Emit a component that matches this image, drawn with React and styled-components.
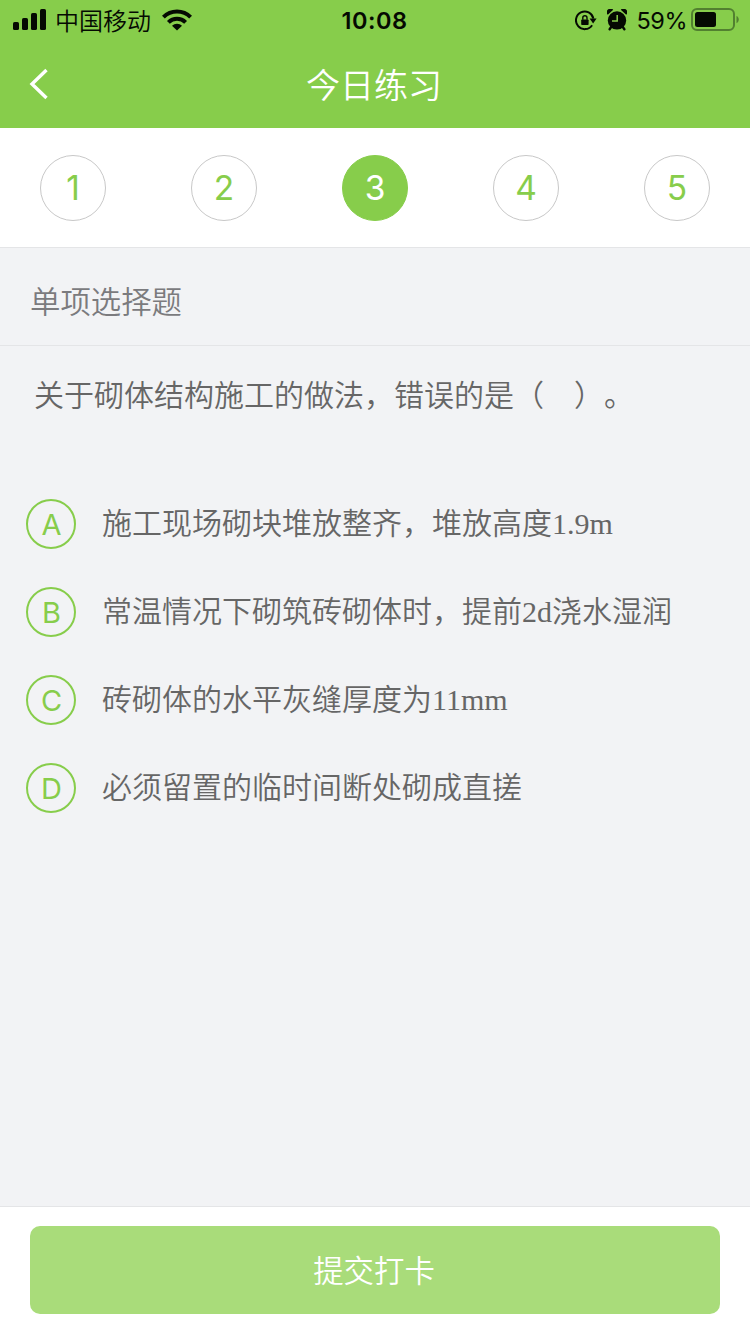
import React from 'react'
import styled, { createGlobalStyle, ThemeProvider } from 'styled-components'

const theme = {
  green: '#87cd4b',
  greenLight: '#a9dc7a',
  white: '#fff',
  black: '#050a02',
  page: '#f2f3f5',
  line: '#e4e5e7',
  text: '#666',
  textLight: '#7b7b7e',
}

const GlobalStyle = createGlobalStyle`
  * {
    box-sizing: border-box;
  }

  body {
    margin: 0;
    font-family: Inter, 'Noto Sans CJK SC', sans-serif;
    text-spacing-trim: space-all;
  }
`

const Screen = styled.div`
  display: flex;
  flex-direction: column;
  width: 750px;
  height: 1334px;
  overflow: hidden;
  background: ${({ theme }) => theme.page};
`

const StatusBar = styled.div`
  display: grid;
  grid-template-columns: 1fr auto 1fr;
  align-items: center;
  flex: none;
  height: 40px;
  padding: 0 11px 0 13px;
  color: ${({ theme }) => theme.black};
  background: ${({ theme }) => theme.green};
`

const StatusSide = styled.div`
  display: flex;
  align-items: center;
  justify-content: ${({ $end }) => ($end ? 'flex-end' : 'flex-start')};

  svg {
    display: block;
    flex: none;
  }
`

const Carrier = styled.span`
  margin: 0 11px 0 9px;
  font: 350 24px/40px 'Noto Sans CJK SC', sans-serif;
`

const Clock = styled.span`
  padding: 2px 3px 0 0;
  font-size: 23.5px;
  font-weight: 600;
  line-height: 38px;
  letter-spacing: 0.5px;
`

const Percent = styled.span`
  margin: 0 4px 0 10px;
  padding-top: 2px;
  font-size: 23.5px;
  line-height: 38px;
  letter-spacing: -0.5px;
`

const NavBar = styled.header`
  display: grid;
  grid-template-columns: 80px 1fr 80px;
  align-items: center;
  flex: none;
  height: 88px;
  color: ${({ theme }) => theme.white};
  background: ${({ theme }) => theme.green};
`

const BackButton = styled.button`
  display: flex;
  height: 88px;
  padding: 28px 0 0 28px;
  border: 0;
  color: inherit;
  background: none;
`

const NavTitle = styled.h1`
  margin: 0;
  padding: 0 2px 0 0;
  font: 350 34px/86px 'Noto Sans CJK SC', sans-serif;
  text-align: center;
`

const Steps = styled.nav`
  display: flex;
  align-items: center;
  justify-content: space-between;
  flex: none;
  height: 120px;
  padding: 0 40px;
  border-bottom: 1px solid ${({ theme }) => theme.line};
  background: ${({ theme }) => theme.white};
`

const Step = styled.button`
  width: 66px;
  height: 66px;
  padding: 0;
  border: 1px solid ${({ theme, $active }) => ($active ? theme.green : '#c8c8c8')};
  border-radius: 50%;
  color: ${({ theme, $active }) => ($active ? theme.white : theme.green)};
  background: ${({ theme, $active }) => ($active ? theme.green : theme.white)};
  font-family: inherit;
  font-size: 33.5px;
  font-weight: 380;
  line-height: 64px;
`

const SectionTitle = styled.h2`
  flex: none;
  height: 98px;
  margin: 0;
  padding-left: 30px;
  border-bottom: 1px solid ${({ theme }) => theme.line};
  color: ${({ theme }) => theme.textLight};
  font: 350 30.4px/105px 'Noto Sans CJK SC', sans-serif;
`

const Content = styled.main`
  flex: 1;
  padding: 28px 26px 0;
  color: ${({ theme }) => theme.text};
  font: 350 30px/44px 'Liberation Serif', 'Noto Sans CJK SC', serif;
`

const Question = styled.p`
  margin: 0;
  padding-left: 8px;
`

const Options = styled.ul`
  display: flex;
  flex-direction: column;
  gap: 38px;
  margin: 81px 0 0;
  padding: 0;
  list-style: none;
`

const Option = styled.li`
  display: flex;
  align-items: center;
  gap: 26px;
  height: 50px;
`

const Letter = styled.span`
  flex: none;
  width: 50px;
  height: 50px;
  padding-left: 1px;
  border: 2px solid ${({ theme }) => theme.green};
  border-radius: 50%;
  color: ${({ theme }) => theme.green};
  font: 380 29px/48px Inter, sans-serif;
  text-align: center;
`

const Footer = styled.footer`
  flex: none;
  height: 128px;
  padding: 19px 30px 0;
  border-top: 1px solid ${({ theme }) => theme.line};
  background: ${({ theme }) => theme.white};
`

const SubmitButton = styled.button`
  width: 100%;
  height: 88px;
  padding: 0 2px 2px 0;
  border: 0;
  border-radius: 10px;
  color: ${({ theme }) => theme.white};
  background: ${({ theme }) => theme.greenLight};
  font: 350 30.4px/86px 'Noto Sans CJK SC', sans-serif;
`

const AlarmGap = styled.span`
  margin-left: 10px;
`

const SignalIcon = () => (
  <svg width="33" height="22" viewBox="0 0 33 22" fill="currentColor">
    <rect x="0" y="13" width="6" height="8" rx="1.6" />
    <rect x="9" y="9" width="6" height="12" rx="1.6" />
    <rect x="18" y="4" width="6" height="17" rx="1.6" />
    <rect x="27" y="0" width="6" height="21" rx="1.6" />
  </svg>
)

const WifiIcon = () => (
  <svg width="30" height="22" viewBox="0 0 30 22" fill="none" stroke="currentColor" strokeWidth="4">
    <path d="M1.4 8.1a19.4 19.4 0 0 1 27.2 0" />
    <path d="M6.4 13.4a12.2 12.2 0 0 1 17.2 0" />
    <path d="M15 21.5l-5-4.8a7.2 7.2 0 0 1 10 0z" fill="currentColor" stroke="none" />
  </svg>
)

const LockIcon = () => (
  <svg width="22" height="22" viewBox="0 0 22 22">
    <path d="M17.1 16.2A8.8 8.8 0 1 1 18.4 9.6" fill="none" stroke="currentColor" strokeWidth="2" />
    <path d="M14.6 9.6h7l-3.5 4.8z" fill="currentColor" />
    <rect x="6.2" y="10.4" width="7.4" height="5.6" rx="0.8" fill="currentColor" />
    <path d="M7.8 10.8V8.8a2.1 2.1 0 0 1 4.2 0v2" fill="none" stroke="currentColor" strokeWidth="1.4" />
  </svg>
)

const AlarmIcon = () => (
  <svg width="20" height="22" viewBox="0 0 20 22" fill="currentColor">
    <circle cx="10" cy="11.4" r="9.2" />
    <path d="M0.8 5.8A3.6 3.6 0 0 1 6.2 0.8zM19.2 5.8A3.6 3.6 0 0 0 13.8 0.8z" />
    <path d="M4.2 18l-1.6 2.2M15.8 18l1.6 2.2" stroke="currentColor" strokeWidth="2.4" strokeLinecap="round" />
    <path d="M10.2 6v6H5" fill="none" stroke="#87cd4b" strokeWidth="1.5" />
  </svg>
)

const BatteryIcon = () => (
  <svg width="48" height="24" viewBox="0 0 48 24">
    <rect x="1" y="1" width="42" height="21" rx="5" fill="none" stroke="#528030" strokeWidth="2" />
    <rect x="4" y="4" width="21" height="15" rx="2.5" fill="currentColor" />
    <path d="M45.5 8c3 1.2 3 6 0 7.2z" fill="#528030" />
  </svg>
)

const BackIcon = () => (
  <svg width="21" height="32" viewBox="0 0 21 32" fill="none" stroke="currentColor" strokeWidth="3.4">
    <path d="M18.5 2L4 16l14.5 14" />
  </svg>
)

const steps = [1, 2, 3, 4, 5]

const options = [
  { letter: 'A', text: '施工现场砌块堆放整齐，堆放高度1.9m' },
  { letter: 'B', text: '常温情况下砌筑砖砌体时，提前2d浇水湿润' },
  { letter: 'C', text: '砖砌体的水平灰缝厚度为11mm' },
  { letter: 'D', text: '必须留置的临时间断处砌成直搓' },
]

const App = () => (
  <ThemeProvider theme={theme}>
    <GlobalStyle />
    <Screen lang="zh-CN">
      <StatusBar>
        <StatusSide>
          <SignalIcon />
          <Carrier>中国移动</Carrier>
          <WifiIcon />
        </StatusSide>
        <Clock>10:08</Clock>
        <StatusSide $end>
          <LockIcon />
          <AlarmGap>
            <AlarmIcon />
          </AlarmGap>
          <Percent>59%</Percent>
          <BatteryIcon />
        </StatusSide>
      </StatusBar>
      <NavBar>
        <BackButton aria-label="返回">
          <BackIcon />
        </BackButton>
        <NavTitle>今日练习</NavTitle>
      </NavBar>
      <Steps>
        {steps.map(step => (
          <Step key={step} $active={step === 3}>{step}</Step>
        ))}
      </Steps>
      <SectionTitle>单项选择题</SectionTitle>
      <Content>
        <Question>关于砌体结构施工的做法，错误的是（　）。</Question>
        <Options>
          {options.map(({ letter, text }) => (
            <Option key={letter}>
              <Letter>{letter}</Letter>
              <span>{text}</span>
            </Option>
          ))}
        </Options>
      </Content>
      <Footer>
        <SubmitButton>提交打卡</SubmitButton>
      </Footer>
    </Screen>
  </ThemeProvider>
)

export default App
